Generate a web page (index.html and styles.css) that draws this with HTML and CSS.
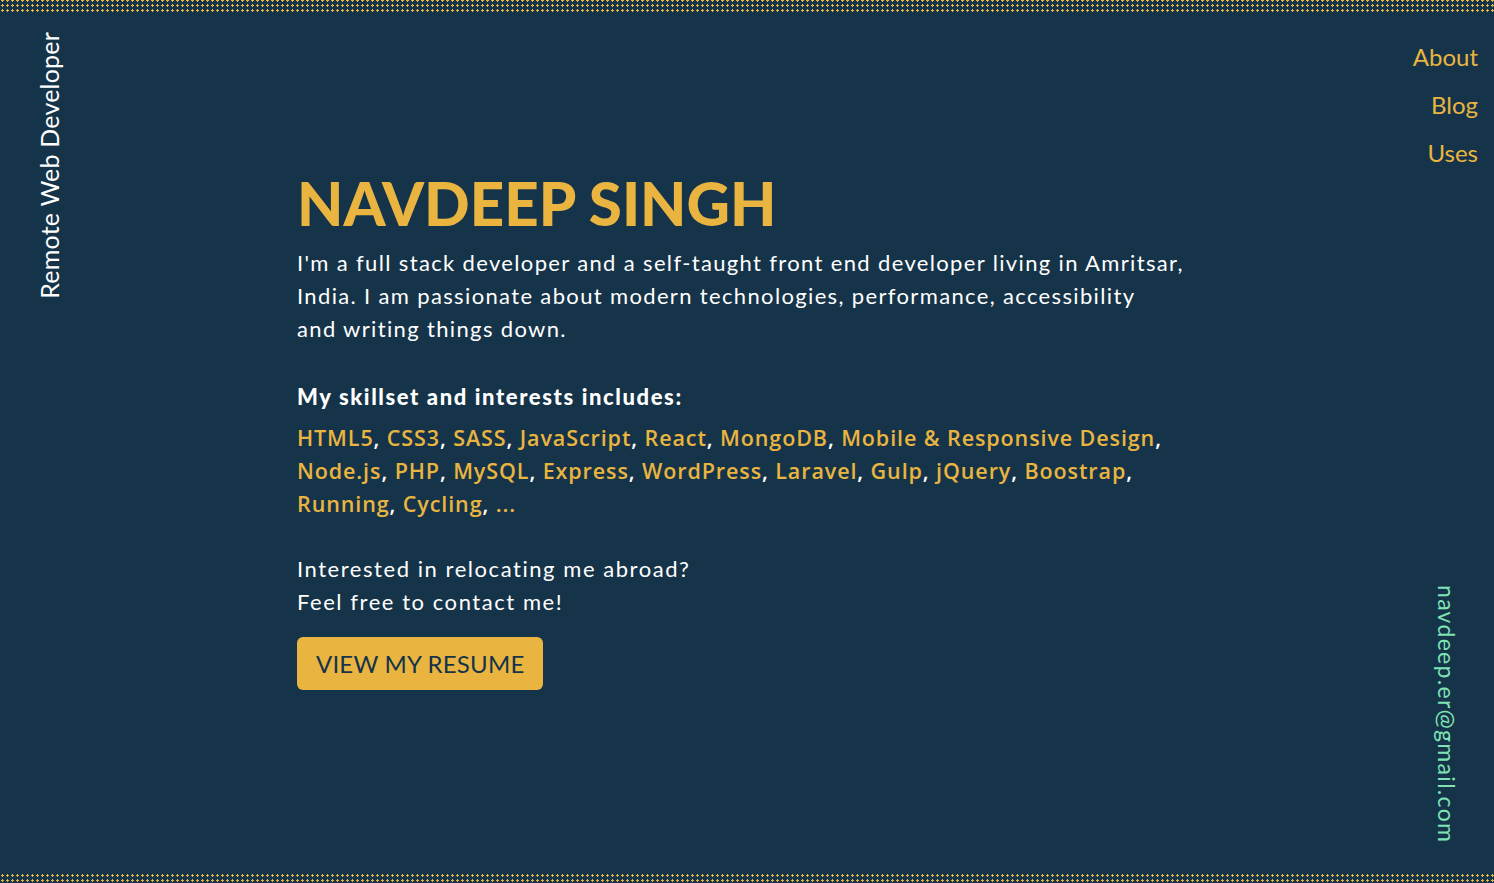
FILE: index.html
```html
<!DOCTYPE html>
<html lang="en">
<head>
<meta charset="utf-8">
<title>Navdeep Singh</title>
<link rel="stylesheet" href="styles.css">
</head>
<body>
<div class="page">
  <svg class="strip strip-top" aria-hidden="true">
    <defs>
      <pattern id="plus-top" x="1" y="4" width="5" height="5" patternUnits="userSpaceOnUse">
        <rect x="0" y="1" width="3" height="1" fill="#e9b540"/>
        <rect x="1" y="0" width="1" height="3" fill="#e9b540"/>
      </pattern>
    </defs>
    <rect width="100%" height="100%" fill="url(#plus-top)"/>
  </svg>

  <div class="main">
    <aside class="side-left">
      <span class="role">Remote Web Developer</span>
    </aside>

    <section class="content">
      <h1 class="name">NAVDEEP SINGH</h1>
      <p class="intro">I'm a full stack developer and a self-taught front end developer living in Amritsar, India. I am passionate about modern technologies, performance, accessibility and&nbsp;writing things down.</p>
      <h2 class="skills-title">My skillset and interests includes:</h2>
      <p class="skills"><span class="skill">HTML5</span>, <span class="skill">CSS3</span>, <span class="skill">SASS</span>, <span class="skill">JavaScript</span>, <span class="skill">React</span>, <span class="skill">MongoDB</span>, <span class="skill">Mobile &amp; Responsive Design</span>, <span class="skill">Node.js</span>, <span class="skill">PHP</span>, <span class="skill">MySQL</span>, <span class="skill">Express</span>, <span class="skill">WordPress</span>, <span class="skill">Laravel</span>, <span class="skill">Gulp</span>, <span class="skill">jQuery</span>, <span class="skill">Boostrap</span>, <span class="skill">Running</span>, <span class="skill">Cycling</span>, <span class="skill">...</span></p>
      <p class="contact">Interested in relocating me abroad?<br>Feel free to contact me!</p>
      <a class="btn" href="#">VIEW MY RESUME</a>
    </section>

    <aside class="side-right">
      <nav class="nav">
        <a href="#">About</a>
        <a href="#">Blog</a>
        <a href="#">Uses</a>
      </nav>
      <a class="email" href="#">navdeep.er@gmail.com</a>
    </aside>
  </div>

  <svg class="strip strip-bottom" aria-hidden="true">
    <defs>
      <pattern id="plus-bottom" x="1" y="1" width="5" height="5" patternUnits="userSpaceOnUse">
        <rect x="0" y="1" width="3" height="1" fill="#e9b540"/>
        <rect x="1" y="0" width="1" height="3" fill="#e9b540"/>
      </pattern>
    </defs>
    <rect width="100%" height="100%" fill="url(#plus-bottom)"/>
  </svg>
</div>
</body>
</html>
```

FILE: styles.css
```css
* { box-sizing: border-box; }

html, body {
  margin: 0;
  padding: 0;
  height: 100%;
}

body {
  background: #163449;
  color: #ffffff;
  font-family: "Lato", "Open Sans", sans-serif;
}

.page {
  height: 883px;
  display: flex;
  flex-direction: column;
  overflow: hidden;
}

.strip {
  display: block;
  width: 100%;
  flex: none;
}
.strip-top { height: 12px; }
.strip-bottom { height: 10px; }

.main {
  flex: 1;
  display: grid;
  grid-template-columns: 297px 1fr auto;
  min-height: 0;
}

.side-left {
  padding: 20px 0 0 34px;
}

.role {
  display: inline-block;
  writing-mode: vertical-rl;
  transform: rotate(180deg);
  font-size: 25px;
  line-height: 30px;
  letter-spacing: 0.2px;
  color: #ffffff;
}

.content {
  padding-top: 155px;
  max-width: 900px;
}

.name {
  margin: 0 0 7px;
  font-size: 60px;
  line-height: 72px;
  font-weight: 900;
  color: #e9b540;
}

.intro {
  margin: 0 0 35px;
  font-size: 22px;
  line-height: 33px;
  letter-spacing: 1.35px;
}

.skills-title {
  margin: 0 0 8px;
  font-size: 22px;
  line-height: 33px;
  font-weight: 900;
  letter-spacing: 1.6px;
}

.skills {
  margin: 0 0 32px;
  font-family: "Open Sans", "Lato", sans-serif;
  font-size: 21.5px;
  line-height: 33px;
  font-weight: 600;
  letter-spacing: 0.9px;
}

.skill { color: #e9b540; }

.contact {
  margin: 0 0 19px;
  font-size: 22px;
  line-height: 33px;
  letter-spacing: 1.55px;
}

.btn {
  display: inline-block;
  background: #e9b540;
  color: #163449;
  text-decoration: none;
  font-size: 24px;
  line-height: 53px;
  padding: 0 19px;
  border-radius: 6px;
  letter-spacing: 0.2px;
}

.side-right {
  display: flex;
  flex-direction: column;
  align-items: flex-end;
  justify-content: space-between;
  padding: 21px 16px 30px 0;
}

.nav {
  display: flex;
  flex-direction: column;
  align-items: flex-end;
}

.nav a {
  color: #e9b540;
  text-decoration: none;
  font-size: 24px;
  line-height: 48px;
}

.email {
  writing-mode: vertical-rl;
  color: #7fe3b4;
  text-decoration: none;
  font-size: 23px;
  line-height: 28px;
  letter-spacing: 1.3px;
  margin-right: 17px;
}
```
